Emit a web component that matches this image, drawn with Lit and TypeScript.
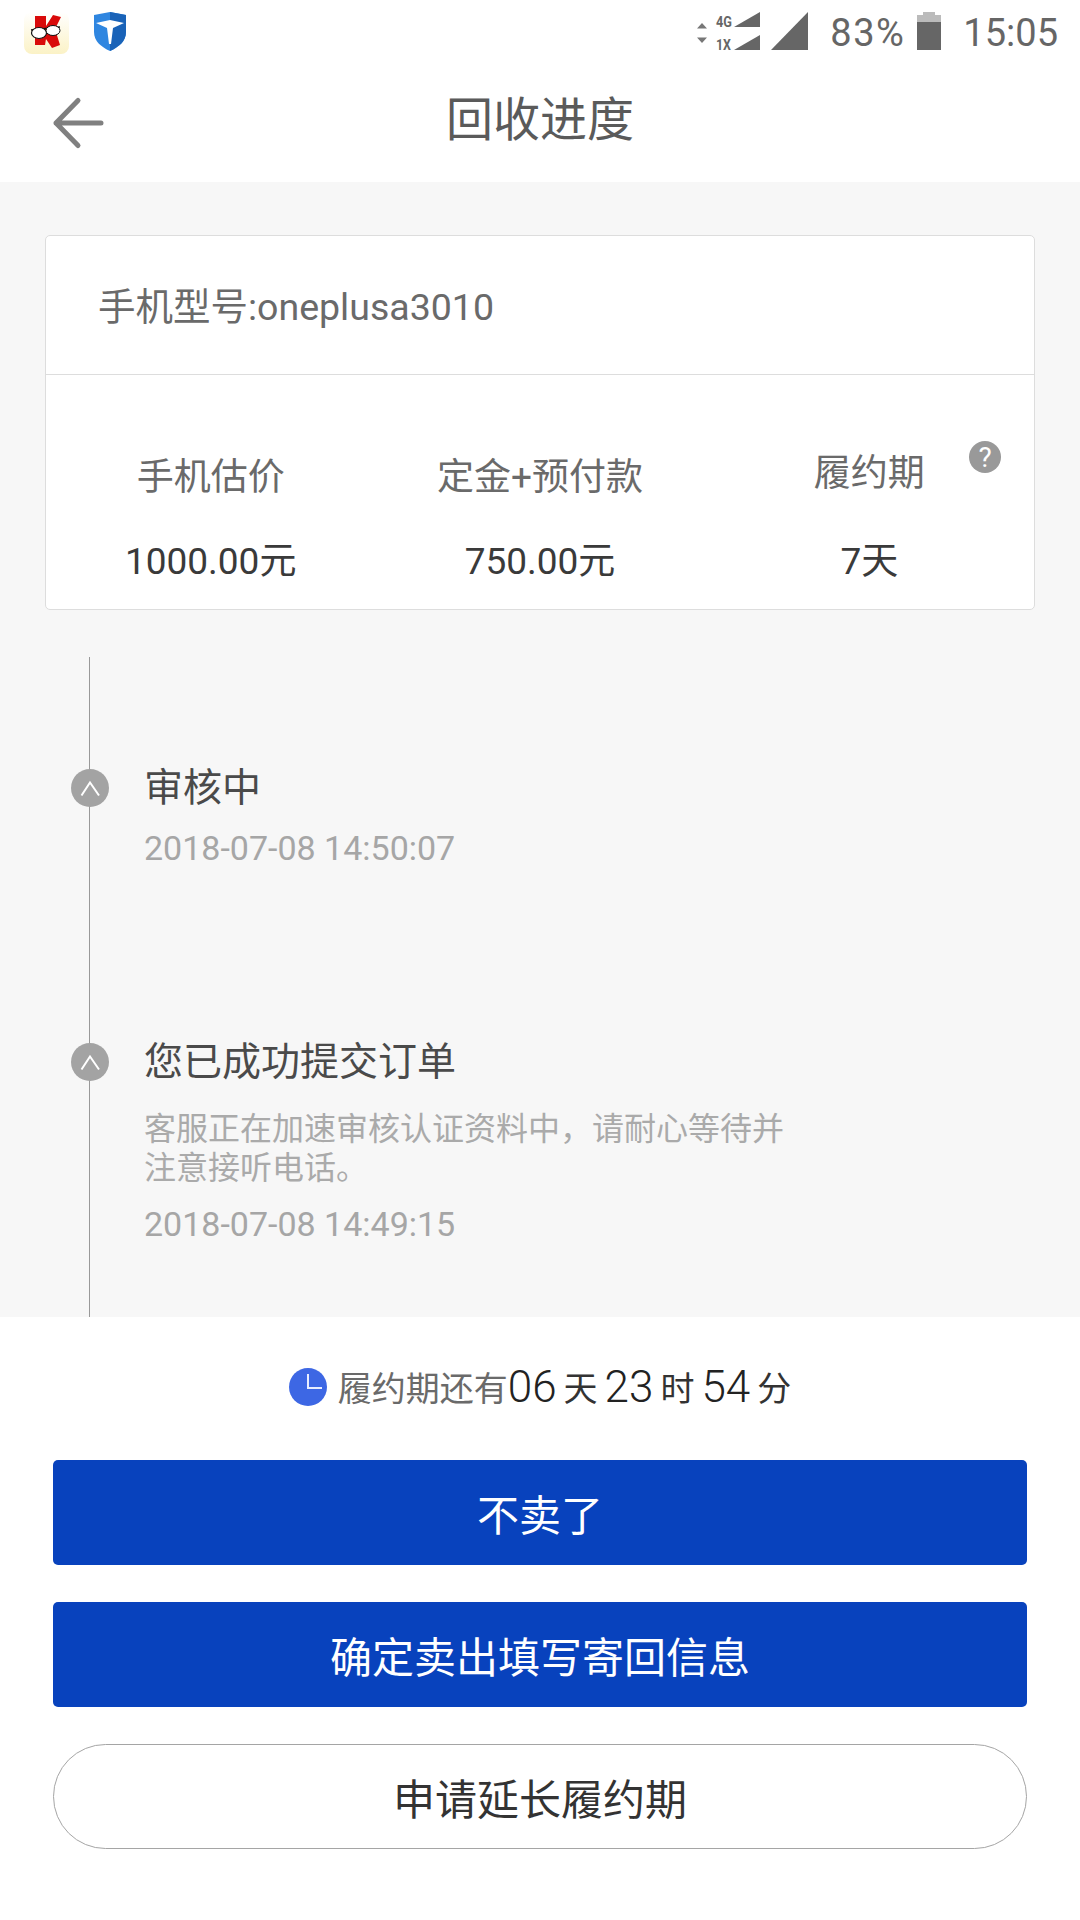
import { LitElement, html, css } from "lit";
import { customElement } from "lit/decorators.js";

const DESC = "客服正在加速审核认证资料中\uFF0C请耐心等待并注意接听电话。";

@customElement("app-root")
export class AppRoot extends LitElement {
  static styles = css`
    :host {
      display: flex;
      flex-direction: column;
      width: 1080px;
      height: 1920px;
      background: #fff;
      font-family: Roboto, "Noto Sans CJK SC", sans-serif;
      color: #333;
      overflow: hidden;
    }
    .status {
      height: 60px;
      display: flex;
      align-items: center;
      padding: 0 22px 0 24px;
      color: #666;
      flex: none;
    }
    .app-k { width: 45px; height: 42px; margin-top: 5px; }
    .app-t { width: 34px; height: 39px; margin-left: 24px; margin-top: 3px; }
    .spacer { flex: 1; }
    .updown { width: 12px; height: 20px; margin-top: 6px; }
    .dual { width: 44px; height: 40px; margin-left: 8px; margin-top: 1px; overflow: visible; }
    .sig { width: 37px; height: 38px; margin-left: 11px; margin-top: 1px; }
    .pct { font-size: 38px; letter-spacing: 1.5px; margin-left: 22px; line-height: 60px; margin-top: 6px; }
    .batt { width: 24px; height: 38px; margin-left: 12px; margin-top: 1px; }
    .time { font-size: 38px; margin-left: 22px; line-height: 60px; margin-top: 6px; }

    .header {
      height: 122px;
      flex: none;
      display: flex;
      align-items: center;
      justify-content: center;
      position: relative;
      font-size: 47px;
      color: #5a5a5a;
      padding-bottom: 12px;
      box-sizing: border-box;
    }
    .back {
      position: absolute;
      left: 49px;
      top: 34px;
      width: 58px;
      height: 58px;
    }

    .main {
      flex: 1;
      background: #f7f7f7;
      padding-top: 53px;
      min-height: 0;
      overflow: hidden;
    }
    .card {
      margin: 0 45px;
      height: 375px;
      box-sizing: border-box;
      background: #fff;
      border: 1px solid #ddd;
      border-radius: 5px;
      display: flex;
      flex-direction: column;
    }
    .model {
      height: 139px;
      flex: none;
      display: flex;
      align-items: center;
      padding: 0 0 4px 52px;
      box-sizing: border-box;
      font-size: 37.5px;
      color: #6a6a6a;
      border-bottom: 1px solid #ddd;
    }
    .stats {
      flex: 1;
      display: grid;
      grid-template-columns: repeat(3, 1fr);
      position: relative;
    }
    .stat {
      display: flex;
      flex-direction: column;
      align-items: center;
      padding-top: 78px;
    }
    .stat-label { font-size: 37px; line-height: 50px; color: #6a6a6a; }
    .stat-value { font-size: 37px; line-height: 50px; color: #3a3a3a; margin-top: 34px; }
    .term .stat-label { margin-top: -4px; margin-bottom: 4px; }
    .help {
      position: absolute;
      right: 33px;
      top: 66px;
      width: 32px;
      height: 32px;
    }

    .timeline {
      margin: 47px 0 0 89px;
      height: 660px;
      box-sizing: border-box;
      border-left: 1px solid #999;
      padding: 107px 0 0 54px;
      position: relative;
    }
    .item { position: relative; }
    .item + .item { margin-top: 170px; }
    .dot {
      position: absolute;
      left: -73px;
      top: 5px;
      width: 38px;
      height: 38px;
    }
    .title { font-size: 39px; line-height: 48px; color: #4a4a4a; }
    .desc {
      font-size: 32px;
      line-height: 39px;
      color: #aaa;
      width: 645px;
      margin-top: 24px;
    }
    .date { font-size: 34px; line-height: 40px; color: #a6a6a6; margin-top: 16px; }

    .footer {
      height: 603px;
      flex: none;
      background: #fff;
      box-sizing: border-box;
      padding: 0 53px;
      display: flex;
      flex-direction: column;
    }
    .count {
      height: 143px;
      flex: none;
      padding-bottom: 4px;
      box-sizing: border-box;
      display: flex;
      align-items: center;
      justify-content: center;
      font-size: 34px;
      color: #6a6a6a;
    }
    .clock { width: 38px; height: 38px; margin-right: 11px; }
    .count b { font-weight: 300; font-size: 44px; color: #222; }
    .count span { color: #333; margin: 0 7px; }
    .count span:last-child { margin-right: 0; }
    .btn {
      height: 105px;
      flex: none;
      display: flex;
      align-items: center;
      justify-content: center;
      font-size: 42px;
      border-radius: 5px;
      background: #0842bd;
      color: #fff;
      box-sizing: border-box;
    }
    .btn + .btn { margin-top: 37px; }
    .btn.ghost {
      background: #fff;
      color: #333;
      border: 1.5px solid #a5a5a5;
      border-radius: 53px;
    }
  `;

  private chevron() {
    return html`<svg class="dot" viewBox="0 0 38 38">
      <circle cx="19" cy="19" r="19" fill="#a3a3a3"></circle>
      <path d="M10.5 26.5 19 13.5 28 26.5" fill="none" stroke="#fff" stroke-width="2"></path>
    </svg>`;
  }

  render() {
    return html`
      <div class="status">
        <svg class="app-k" viewBox="0 0 45 42">
          <defs>
            <linearGradient id="kbg" x1="0" y1="0" x2="0" y2="1">
              <stop offset="0" stop-color="#ffffff"></stop>
              <stop offset="1" stop-color="#fbf2c6"></stop>
            </linearGradient>
          </defs>
          <rect width="45" height="42" rx="8" fill="url(#kbg)"></rect>
          <path d="M11 4H22V14L29 3 37 5 31 17 36 33 28 36 22 27 21 33H11Z" fill="#d90a0a"></path>
          <path d="M7 18 36 15" stroke="#111" stroke-width="1.5" fill="none"></path>
          <ellipse cx="15" cy="21" rx="7.5" ry="5.5" fill="#fff" stroke="#111" stroke-width="1.2"></ellipse>
          <ellipse cx="29" cy="18.5" rx="7" ry="5" fill="#fff" stroke="#111" stroke-width="1"></ellipse>
        </svg>
        <svg class="app-t" viewBox="0 0 34 39">
          <path d="M17 0 33 3V20C33 29 26 35 17 39 8 35 1 29 1 20V3Z" fill="#2f86e0"></path>
          <path d="M17 0 33 3V20C33 29 26 35 17 39Z" fill="#1a63b8"></path>
          <path d="M3 11 17 8 31 11 20 16 18 32H16L14 16Z" fill="#fff"></path>
        </svg>
        <div class="spacer"></div>
        <svg class="updown" viewBox="0 0 12 20">
          <path d="M6 0 11 5.5H1Z M1 14.5H11L6 20Z" fill="#777"></path>
        </svg>
        <svg class="dual" viewBox="0 0 44 40">
          <text x="0" y="16" font-size="15" font-weight="700" fill="#666" font-family="Roboto" textLength="16" lengthAdjust="spacingAndGlyphs">4G</text>
          <path d="M18 16 44 1V16Z" fill="#666"></path>
          <text x="0" y="39" font-size="15" font-weight="700" fill="#666" font-family="Roboto" textLength="15" lengthAdjust="spacingAndGlyphs">1X</text>
          <path d="M18 39 44 24V39Z" fill="#666"></path>
        </svg>
        <svg class="sig" viewBox="0 0 37 38"><path d="M0 38 37 0V38Z" fill="#666"></path></svg>
        <div class="pct">83%</div>
        <svg class="batt" viewBox="0 0 24 38">
          <path d="M6 0H18V3H24V10H0V3H6Z" fill="#bbb"></path>
          <rect y="10" width="24" height="28" fill="#666"></rect>
        </svg>
        <div class="time">15:05</div>
      </div>

      <div class="header">
        <svg class="back" viewBox="0 0 58 58">
          <path d="M29 6.5 7 29 29 51.5M7 29H52" fill="none" stroke="#808080" stroke-width="5" stroke-linecap="round" stroke-linejoin="round"></path>
        </svg>
        回收进度
      </div>

      <div class="main">
        <div class="card">
          <div class="model">手机型号:oneplusa3010</div>
          <div class="stats">
            <div class="stat"><div class="stat-label">手机估价</div><div class="stat-value">1000.00元</div></div>
            <div class="stat"><div class="stat-label">定金+预付款</div><div class="stat-value">750.00元</div></div>
            <div class="stat term"><div class="stat-label">履约期</div><div class="stat-value">7天</div></div>
            <svg class="help" viewBox="0 0 32 32">
              <circle cx="16" cy="16" r="16" fill="#999"></circle>
              <text x="16" y="26" text-anchor="middle" font-size="28" fill="#fff" font-family="Roboto">?</text>
            </svg>
          </div>
        </div>

        <div class="timeline">
          <div class="item">
            ${this.chevron()}
            <div class="title">审核中</div>
            <div class="date">2018-07-08 14:50:07</div>
          </div>
          <div class="item">
            ${this.chevron()}
            <div class="title">您已成功提交订单</div>
            <div class="desc">${DESC}</div>
            <div class="date">2018-07-08 14:49:15</div>
          </div>
        </div>
      </div>

      <div class="footer">
        <div class="count">
          <svg class="clock" viewBox="0 0 38 38">
            <circle cx="19" cy="19" r="19" fill="#3d67e4"></circle>
            <path d="M19 6V20H33" fill="none" stroke="#e8edff" stroke-width="2"></path>
          </svg>
          履约期还有<b>06</b><span>天</span><b>23</b><span>时</span><b>54</b><span>分</span>
        </div>
        <div class="btn">不卖了</div>
        <div class="btn">确定卖出填写寄回信息</div>
        <div class="btn ghost">申请延长履约期</div>
      </div>
    `;
  }
}
